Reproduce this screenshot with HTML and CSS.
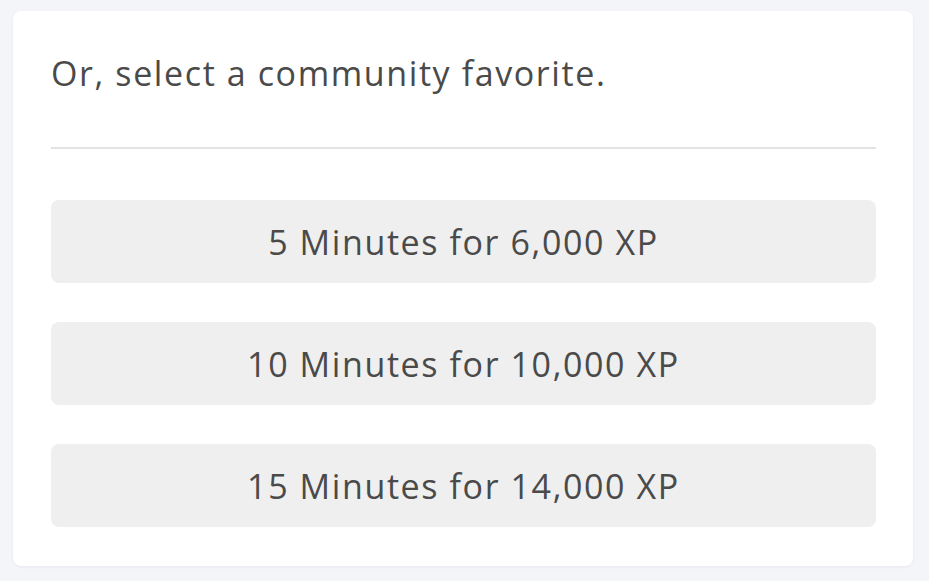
FILE: index.html
```html
<!DOCTYPE html>
<html>
<head>
<meta charset="utf-8">
<link rel="stylesheet" href="styles.css">
</head>
<body>
<div class="card">
  <h2 class="title">Or, select a community favorite.</h2>
  <hr class="divider">
  <div class="options">
    <button class="option">5 Minutes for 6,000 XP</button>
    <button class="option">10 Minutes for 10,000 XP</button>
    <button class="option">15 Minutes for 14,000 XP</button>
  </div>
</div>
</body>
</html>
```
FILE: styles.css
```css
html, body {
  margin: 0;
  background: #f4f5f9;
}
body {
  padding: 11px 16px 16px 13px;
  font-family: "Open Sans", "DejaVu Sans", sans-serif;
  color: #4a4a4a;
}
.card {
  width: 900px;
  box-sizing: border-box;
  background: #ffffff;
  border-radius: 8px;
  padding: 38px 37px 39px 38px;
  box-shadow: 0 1px 3px rgba(30, 40, 80, 0.06);
}
.title {
  margin: 0 0 50px;
  height: 48px;
  line-height: 48px;
  font-size: 34px;
  letter-spacing: 1.6px;
  font-weight: 400;
  color: #4a4a4a;
}
.divider {
  margin: 0 0 51px;
  border: 0;
  height: 2px;
  background: #e3e3e3;
}
.options {
  display: flex;
  flex-direction: column;
  gap: 39px;
}
.option {
  display: block;
  width: 100%;
  height: 83px;
  border: 0;
  border-radius: 8px;
  background: #efefef;
  font-family: inherit;
  font-size: 34px;
  letter-spacing: 1.6px;
  color: #4a4a4a;
  padding: 0;
}
```
